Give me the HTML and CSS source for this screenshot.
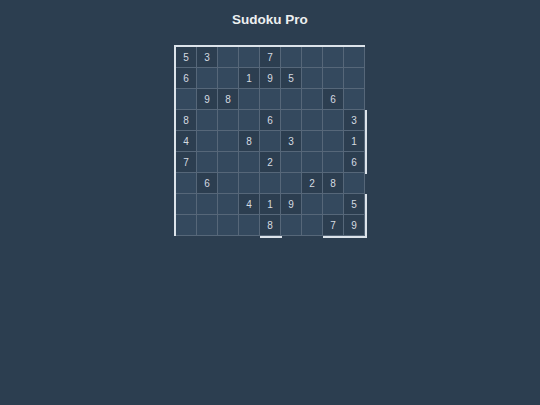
FILE: index.html
```html
<!DOCTYPE html>
<html>
<head>
<meta charset="utf-8">
<title>Sudoku Pro</title>
<link rel="stylesheet" href="styles.css">
</head>
<body>
<h1 class="title">Sudoku Pro</h1>
<div class="board">
  <div class="cell given">5</div><div class="cell given">3</div><div class="cell"></div><div class="cell"></div><div class="cell given">7</div><div class="cell"></div><div class="cell"></div><div class="cell"></div><div class="cell"></div>
  <div class="cell given">6</div><div class="cell"></div><div class="cell"></div><div class="cell given">1</div><div class="cell given">9</div><div class="cell given">5</div><div class="cell"></div><div class="cell"></div><div class="cell"></div>
  <div class="cell"></div><div class="cell given">9</div><div class="cell given">8</div><div class="cell"></div><div class="cell"></div><div class="cell"></div><div class="cell"></div><div class="cell given">6</div><div class="cell"></div>
  <div class="cell given">8</div><div class="cell"></div><div class="cell"></div><div class="cell"></div><div class="cell given">6</div><div class="cell"></div><div class="cell"></div><div class="cell"></div><div class="cell given">3</div>
  <div class="cell given">4</div><div class="cell"></div><div class="cell"></div><div class="cell given">8</div><div class="cell"></div><div class="cell given">3</div><div class="cell"></div><div class="cell"></div><div class="cell given">1</div>
  <div class="cell given">7</div><div class="cell"></div><div class="cell"></div><div class="cell"></div><div class="cell given">2</div><div class="cell"></div><div class="cell"></div><div class="cell"></div><div class="cell given">6</div>
  <div class="cell"></div><div class="cell given">6</div><div class="cell"></div><div class="cell"></div><div class="cell"></div><div class="cell"></div><div class="cell given">2</div><div class="cell given">8</div><div class="cell"></div>
  <div class="cell"></div><div class="cell"></div><div class="cell"></div><div class="cell given">4</div><div class="cell given">1</div><div class="cell given">9</div><div class="cell"></div><div class="cell"></div><div class="cell given">5</div>
  <div class="cell"></div><div class="cell"></div><div class="cell"></div><div class="cell"></div><div class="cell given">8</div><div class="cell"></div><div class="cell"></div><div class="cell given">7</div><div class="cell given">9</div>
  <span class="edge edge-right-mid"></span>
  <span class="edge edge-right-low"></span>
  <span class="edge edge-bottom-mid"></span>
  <span class="edge edge-bottom-right"></span>
</div>
</body>
</html>
```
FILE: styles.css
```css
html, body {
  margin: 0;
  padding: 0;
  background: #2c3e50;
  font-family: "Liberation Sans", Arial, sans-serif;
}

body {
  width: 540px;
  height: 405px;
  overflow: hidden;
}

.title {
  margin: 0;
  padding-top: 12px;
  font-size: 13.5px;
  line-height: 15px;
  font-weight: bold;
  text-align: center;
  color: #ecf0f1;
}

.board {
  position: relative;
  display: grid;
  grid-template-columns: repeat(9, 20px);
  grid-auto-rows: 20px;
  gap: 1px;
  width: fit-content;
  margin: 18px 0 0 174px;
  padding: 0 1px 1px 0;
  background: #566779;
  border-left: 2px solid #dce3ea;
  border-top: 2px solid #dce3ea;
}

.cell {
  background: #34495e;
  color: #d5dbe0;
  font-size: 10px;
  display: flex;
  align-items: center;
  justify-content: center;
}

.cell.given {
  background: #2c3e50;
}

.edge {
  position: absolute;
  background: #dce3ea;
}

.edge-right-mid {
  left: 100%;
  top: 63px;
  width: 2px;
  height: 64px;
}

.edge-right-low {
  left: 100%;
  top: 147px;
  width: 2px;
  height: 44px;
}

.edge-bottom-mid {
  top: 100%;
  left: 84px;
  width: 22px;
  height: 2px;
}

.edge-bottom-right {
  top: 100%;
  left: 147px;
  width: 44px;
  height: 2px;
}
```
